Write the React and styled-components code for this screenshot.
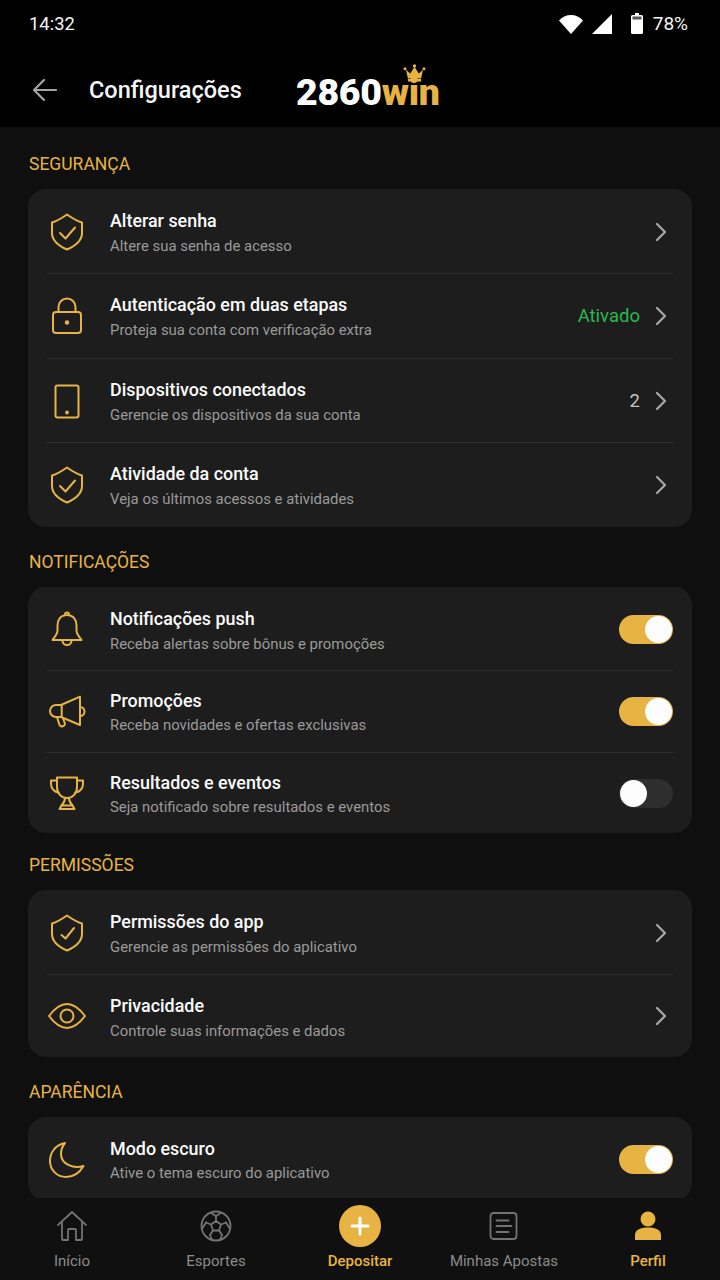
import styled, { createGlobalStyle } from "styled-components"
import { useState } from "react"

const GOLD = "#e7b443"

const GlobalStyle = createGlobalStyle`
    html, body {
        margin: 0;
        padding: 0;
        background: #0f0f0f;
    }
    * {
        box-sizing: border-box;
    }
`
const Phone = styled.div`
    width: 720px;
    height: 1280px;
    display: flex;
    flex-direction: column;
    overflow: hidden;
    background: #0f0f0f;
    font-family: Roboto, "Noto Sans", sans-serif;
    color: #fff;
`
const StatusBar = styled.div`
    height: 47px;
    flex: none;
    display: flex;
    align-items: center;
    justify-content: space-between;
    padding: 0 32px 0 29px;
    background: #000;
    font-size: 18.4px;
    color: #f4f4f4;
`
const StatusIcons = styled.div`
    display: flex;
    align-items: center;
    gap: 9px;
`
const Percent = styled.span`
    margin-left: 1px;
    font-size: 19px;
`
const AppBar = styled.div`
    height: 80px;
    flex: none;
    display: flex;
    align-items: center;
    padding: 6px 0 0 32px;
    background: #000;
`
const BackButton = styled.div`
    width: 28px;
    height: 24px;
    margin-right: 29px;
    display: flex;
`
const PageTitle = styled.div`
    width: 153px;
    font-size: 23.5px;
    font-weight: 500;
    color: #f5f5f5;
    white-space: nowrap;
`
const Logo = styled.div`
    position: relative;
    margin-left: 54px;
    margin-top: 4px;
    font-size: 37.5px;
    font-weight: 900;
    letter-spacing: -0.3px;
    color: #fff;
`
const LogoGold = styled.span`
    color: ${GOLD};
`
const Crown = styled.svg`
    position: absolute;
    top: -6px;
    left: 107px;
`
const Content = styled.div`
    flex: 1;
    min-height: 0;
    overflow: hidden;
`
const SectionTitle = styled.div`
    margin: ${(p) => p.$top}px 0 ${(p) => p.$bottom}px 29px;
    font-size: 17.5px;
    line-height: 22px;
    color: ${GOLD};
`
const Card = styled.div`
    margin: 0 28px;
    padding: 0 19px;
    background: #1d1d1d;
    border-radius: 18px;
`
const Row = styled.div`
    height: ${(p) => p.$h}px;
    display: flex;
    align-items: center;
    border-top: 1px solid ${(p) => (p.$first ? "transparent" : "#303030")};
`
const IconBox = styled.div`
    width: 40px;
    height: 40px;
    flex: none;
    margin-right: 23px;
`
const Texts = styled.div`
    flex: 1;
    padding-top: ${(p) => p.$pad}px;
`
const RowTitle = styled.div`
    font-size: 17.9px;
    line-height: 22px;
    font-weight: 500;
    color: #fbfbfb;
`
const RowSub = styled.div`
    margin-top: ${(p) => p.$gap}px;
    font-size: 14.9px;
    line-height: 20px;
    color: #9a9a9a;
`
const Value = styled.div`
    margin-right: 15px;
    font-size: 18.5px;
    color: ${(p) => (p.$green ? "#29b84f" : "#c4c4c4")};
`
const Chevron = styled.svg`
    flex: none;
    margin-right: 6px;
`
const Track = styled.div`
    width: 54px;
    height: 29px;
    flex: none;
    position: relative;
    border-radius: 15px;
    background: ${(p) => (p.$on ? GOLD : "#2e2e2e")};
`
const Knob = styled.div`
    position: absolute;
    top: 1px;
    left: ${(p) => (p.$on ? "26px" : "1px")};
    width: 27px;
    height: 27px;
    border-radius: 50%;
    background: #fdfdfd;
`
const BottomNav = styled.div`
    position: relative;
    height: 82px;
    flex: none;
    display: grid;
    grid-template-columns: repeat(5, 1fr);
    background: #101010;
`
const NavItem = styled.div`
    display: flex;
    flex-direction: column;
    align-items: center;
    padding-top: 7px;
    font-size: 15px;
    color: ${(p) => (p.$active ? GOLD : "#8b8b8b")};
    font-weight: ${(p) => (p.$active ? 500 : 400)};
`
const NavIcon = styled.div`
    height: 42px;
    display: flex;
    align-items: center;
    justify-content: center;
    margin-bottom: 5px;
`
const PlusCircle = styled.div`
    width: 42px;
    height: 42px;
    margin-left: -1px;
    border-radius: 50%;
    background: ${GOLD};
    display: flex;
    align-items: center;
    justify-content: center;
`

const Outline = ({ children }) => (
    <svg width="40" height="40" viewBox="0 0 40 40" fill="none" stroke={GOLD} strokeWidth="2" strokeLinecap="round" strokeLinejoin="round">
        {children}
    </svg>
)
const shieldPath = "M20 2.5C25 6 30 9 35 10.5V21C35 29 28 34 20 37.5C12 34 5 29 5 21V10.5C10 9 15 6 20 2.5Z"

const icons = {
    shield: (
        <Outline>
            <path d={shieldPath} />
            <path d="M13 21L18.5 26.5L28 15.5" />
        </Outline>
    ),
    shieldApp: (
        <Outline>
            <path d={shieldPath} />
            <path d="M14.5 22L18.5 25.5L27 15" />
        </Outline>
    ),
    lock: (
        <Outline>
            <rect x="6" y="16" width="28" height="21" rx="3" />
            <path d="M11.5 16V11a8.5 8.5 0 0 1 17 0V16" />
            <circle cx="20" cy="26.5" r="1.3" fill={GOLD} />
        </Outline>
    ),
    tablet: (
        <Outline>
            <rect x="8.5" y="4.5" width="23" height="32" rx="2" />
            <circle cx="20" cy="31.5" r="0.9" fill={GOLD} />
        </Outline>
    ),
    bell: (
        <Outline>
            <path d="M20 6C13.5 6 10.5 11 10.5 16.5V22C10.5 26 7 28 5.5 31H34.5C33 28 29.5 26 29.5 22V16.5C29.5 11 26.5 6 20 6Z" />
            <path d="M18 5.5a2 2 0 0 1 4 0" />
            <path d="M15.5 31.5a4.5 4.5 0 0 0 9 0" />
        </Outline>
    ),
    megaphone: (
        <Outline>
            <path d="M33 4.7L14 13H9a6 6 0 0 0 0 12H14L33 33Z" />
            <path d="M14.7 13V25" />
            <path d="M33 15a4.5 4.5 0 0 1 0 9" />
            <path d="M10 25L12.5 33a3 3 0 0 0 5.5-1.5L16 26.5" />
        </Outline>
    ),
    trophy: (
        <Outline>
            <path d="M10 4.5H30V14C30 21 25 25 20 25C15 25 10 21 10 14Z" />
            <path d="M10 7.5H4V11C4 16 8 19 11.5 19.5" />
            <path d="M30 7.5H36V11C36 16 32 19 28.5 19.5" />
            <path d="M18 25C18 29 16 31 14.5 32.5H25.5C24 31 22 29 22 25" />
            <path d="M14.5 32.5L12.5 36H27.5L25.5 32.5" />
        </Outline>
    ),
    eye: (
        <Outline>
            <path d="M2 20C8 12 14 8 20 8C26 8 32 12 38 20C32 28 26 32 20 32C14 32 8 28 2 20Z" />
            <circle cx="20" cy="20" r="6.5" />
        </Outline>
    ),
    moon: (
        <Outline>
            <path d="M18 3C8 5 3 13 3 21C3 30 10 37 19 37C27 37 33 32 36.5 26C26 29 14 24 14 14C14 10 15.5 6 18 3Z" />
        </Outline>
    ),
}

const sections = [
    {
        title: "SEGURANÇA",
        top: 26,
        bottom: 14,
        rows: [
            { h: 84, icon: "shield", title: "Alterar senha", sub: "Altere sua senha de acesso" },
            { h: 85, icon: "lock", title: "Autenticação em duas etapas", sub: "Proteja sua conta com verificação extra", value: "Ativado", green: true },
            { h: 84, icon: "tablet", title: "Dispositivos conectados", sub: "Gerencie os dispositivos da sua conta", value: "2" },
            { h: 85, icon: "shield", title: "Atividade da conta", sub: "Veja os últimos acessos e atividades" },
        ],
    },
    {
        title: "NOTIFICAÇÕES",
        top: 24,
        bottom: 14,
        rows: [
            { h: 83, icon: "bell", title: "Notificações push", sub: "Receba alertas sobre bônus e promoções", toggle: true, pad: 3 },
            { h: 82, icon: "megaphone", title: "Promoções", sub: "Receba novidades e ofertas exclusivas", toggle: true, gap: 3 },
            { h: 81, icon: "trophy", title: "Resultados e eventos", sub: "Seja notificado sobre resultados e eventos", toggle: false, gap: 3, pad: 3 },
        ],
    },
    {
        title: "PERMISSÕES",
        top: 21,
        bottom: 14,
        rows: [
            { h: 84, icon: "shieldApp", title: "Permissões do app", sub: "Gerencie as permissões do aplicativo" },
            { h: 83, icon: "eye", title: "Privacidade", sub: "Controle suas informações e dados", pad: 4 },
        ],
    },
    {
        title: "APARÊNCIA",
        top: 24,
        bottom: 14,
        rows: [
            { h: 84, icon: "moon", title: "Modo escuro", sub: "Ative o tema escuro do aplicativo", toggle: true, gap: 3 },
        ],
    },
]

function Toggle({ initial }) {
    const [on, setOn] = useState(initial)
    return (
        <Track $on={on} onClick={() => setOn(!on)}>
            <Knob $on={on} />
        </Track>
    )
}

function SettingRow({ row, first }) {
    return (
        <Row $h={row.h} $first={first}>
            <IconBox>{icons[row.icon]}</IconBox>
            <Texts $pad={row.pad ?? 2}>
                <RowTitle>{row.title}</RowTitle>
                <RowSub $gap={row.gap ?? 4}>{row.sub}</RowSub>
            </Texts>
            {row.value && <Value $green={row.green}>{row.value}</Value>}
            {row.toggle === undefined ? (
                <Chevron width="12" height="20" viewBox="0 0 12 20" fill="none" stroke="#a8a8a8" strokeWidth="2.2" strokeLinecap="round" strokeLinejoin="round">
                    <path d="M2 2L10 10L2 18" />
                </Chevron>
            ) : (
                <Toggle initial={row.toggle} />
            )}
        </Row>
    )
}

const navStroke = { fill: "none", stroke: "#737373", strokeWidth: 1.8, strokeLinecap: "round", strokeLinejoin: "round" }

function App() {
    return (
        <Phone>
            <GlobalStyle />
            <StatusBar>
                <span>14:32</span>
                <StatusIcons>
                    <svg width="24" height="20" viewBox="0 0 24 20">
                        <path d="M0 6.5C3 3 7.5 1 12 1s9 2 12 5.5L12 20Z" fill="#fff" />
                    </svg>
                    <svg width="20" height="20" viewBox="0 0 20 20">
                        <path d="M20 0V20H0Z" fill="#fff" />
                    </svg>
                    <svg width="12" height="21" viewBox="0 0 12 21" style={{ marginLeft: 10 }}>
                        <path d="M4 0H8V2H10.5A1.5 1.5 0 0 1 12 3.5V19.5A1.5 1.5 0 0 1 10.5 21H1.5A1.5 1.5 0 0 1 0 19.5V3.5A1.5 1.5 0 0 1 1.5 2H4Z" fill="#fff" />
                        <rect x="1.5" y="3.5" width="9" height="3" fill="#555" />
                    </svg>
                    <Percent>78%</Percent>
                </StatusIcons>
            </StatusBar>
            <AppBar>
                <BackButton>
                    <svg width="26" height="24" viewBox="0 0 26 24" fill="none" stroke="#a5a5a5" strokeWidth="2.2" strokeLinecap="round" strokeLinejoin="round">
                        <path d="M24 12H3M12 2L2 12L12 22" />
                    </svg>
                </BackButton>
                <PageTitle>Configurações</PageTitle>
                <Logo>
                    2860<LogoGold>win</LogoGold>
                    <Crown width="23" height="18" viewBox="0 0 24 19" fill={GOLD}>
                        <path d="M3 6L7.5 10L12 3L16.5 10L21 6L19 15H5Z" />
                        <rect x="5" y="15.5" width="14" height="3" />
                        <circle cx="12" cy="2" r="1.8" />
                        <circle cx="2" cy="5" r="1.6" />
                        <circle cx="22" cy="5" r="1.6" />
                    </Crown>
                </Logo>
            </AppBar>
            <Content>
                {sections.map((section) => (
                    <div key={section.title}>
                        <SectionTitle $top={section.top} $bottom={section.bottom}>{section.title}</SectionTitle>
                        <Card>
                            {section.rows.map((row, i) => (
                                <SettingRow key={row.title} row={row} first={i === 0} />
                            ))}
                        </Card>
                    </div>
                ))}
            </Content>
            <BottomNav>
                <NavItem>
                    <NavIcon>
                        <svg width="32" height="32" viewBox="0 0 32 32" {...navStroke}>
                            <path d="M2 15L16 2L30 15" />
                            <path d="M6 12V29a1 1 0 0 0 1 1H12V20a1 1 0 0 1 1-1H19a1 1 0 0 1 1 1V30H25a1 1 0 0 0 1-1V12" />
                        </svg>
                    </NavIcon>
                    Início
                </NavItem>
                <NavItem>
                    <NavIcon>
                        <svg width="32" height="32" viewBox="0 0 32 32" {...navStroke}>
                            <circle cx="16" cy="16" r="14.5" />
                            <path d="M16 11L21 14.5L19 20.5H13L11 14.5Z" />
                            <path d="M16 11V6M21 14.5L26 12.5M19 20.5L22 25M13 20.5L10 25M11 14.5L6 12.5" />
                            <path d="M11 3L16 6L21 3M26 12.5L29.5 18M22 25L20 30M10 25L12 30M6 12.5L2.5 18" />
                        </svg>
                    </NavIcon>
                    Esportes
                </NavItem>
                <NavItem $active>
                    <NavIcon>
                        <PlusCircle>
                            <svg width="20" height="20" viewBox="0 0 20 20" fill="none" stroke="#fff" strokeWidth="3" strokeLinecap="round">
                                <path d="M10 2V18M2 10H18" />
                            </svg>
                        </PlusCircle>
                    </NavIcon>
                    Depositar
                </NavItem>
                <NavItem>
                    <NavIcon>
                        <svg width="30" height="30" viewBox="0 0 30 30" {...navStroke}>
                            <rect x="1.5" y="2" width="26" height="26" rx="3" />
                            <path d="M7.5 9.5H19.5M7.5 15H22.5M7.5 21H19.5" />
                        </svg>
                    </NavIcon>
                    Minhas Apostas
                </NavItem>
                <NavItem $active>
                    <NavIcon>
                        <svg width="28" height="30" viewBox="0 0 28 30" fill={GOLD}>
                            <ellipse cx="14" cy="8" rx="7.5" ry="7.5" />
                            <path d="M1 29V24C1 19 6 16.5 14 16.5S27 19 27 24V29Z" />
                        </svg>
                    </NavIcon>
                    Perfil
                </NavItem>
            </BottomNav>
        </Phone>
    )
}
export default App
